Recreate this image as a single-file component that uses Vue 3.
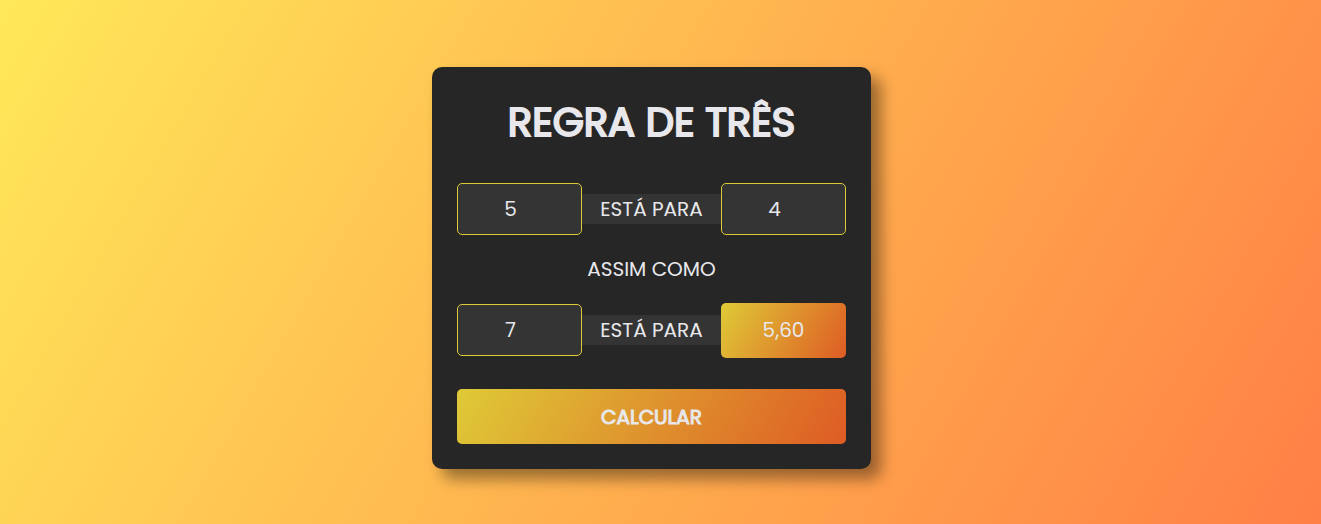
<script setup>
import { ref } from 'vue'

const first = ref('5')
const second = ref('4')
const third = ref('7')
const result = ref('5,60')

const toNumber = (value) => Number(String(value).replace(',', '.'))

function calculate() {
  const value = (toNumber(second.value) * toNumber(third.value)) / toNumber(first.value)
  result.value = Number.isFinite(value) ? value.toFixed(2).replace('.', ',') : ''
}
</script>

<template>
  <main class="page">
    <form class="card" @submit.prevent="calculate">
      <h1 class="title">REGRA DE TRÊS</h1>
      <div class="row">
        <input id="first" v-model="first" class="field" type="text" inputmode="decimal" aria-label="Primeiro valor" />
        <label class="relation" for="second">ESTÁ PARA</label>
        <input id="second" v-model="second" class="field" type="text" inputmode="decimal" />
      </div>
      <p class="between">ASSIM COMO</p>
      <div class="row">
        <input id="third" v-model="third" class="field" type="text" inputmode="decimal" aria-label="Terceiro valor" />
        <label class="relation" for="result">ESTÁ PARA</label>
        <input id="result" :value="result" class="field result" type="text" readonly />
      </div>
      <button class="submit" type="submit">CALCULAR</button>
    </form>
  </main>
</template>

<style>
body {
  margin: 0;
}
</style>

<style scoped>
.page {
  box-sizing: border-box;
  min-height: 100vh;
  padding: 12px 18px 0 0;
  display: flex;
  align-items: center;
  justify-content: center;
  background: linear-gradient(120deg, #ffe859, #ff7f45);
  color: #e8e8ec;
  font-family: Poppins, Lato, sans-serif;
  font-size: 20px;
  line-height: 30px;
}
.card {
  box-sizing: border-box;
  width: 100%;
  max-width: 439px;
  padding: 25px;
  border-radius: 10px;
  background: #262626;
  box-shadow: 10px 10px 15px rgba(0, 0, 0, 0.4);
}
.title {
  margin: 0 0 30px;
  font-size: 40px;
  line-height: 60px;
  font-weight: 400;
  -webkit-text-stroke: 2px currentColor;
  text-align: center;
}
.row {
  box-sizing: border-box;
  display: flex;
  align-items: center;
  height: 55px;
  padding-bottom: 1px;
}
.field {
  box-sizing: border-box;
  flex: none;
  width: 125px;
  height: 52px;
  padding: 0 20px 0 2px;
  border: 1px solid #dfc938;
  border-radius: 5px;
  outline: none;
  background: #343434;
  color: inherit;
  font: inherit;
  text-align: center;
}
.relation {
  flex: 1;
  background: #343434;
  text-align: center;
}
.between {
  margin: 17px 0 19px;
  text-align: center;
}
.result,
.submit {
  height: 55px;
  padding: 0;
  border: 0;
  border-radius: 5px;
  background: linear-gradient(120deg, #dfca37, #de5c24);
}
.result {
  margin-bottom: -1px;
  padding-bottom: 1px;
}
.submit {
  display: block;
  width: 100%;
  margin-top: 31px;
  color: inherit;
  font: inherit;
  -webkit-text-stroke: 1px currentColor;
  cursor: pointer;
}
</style>
